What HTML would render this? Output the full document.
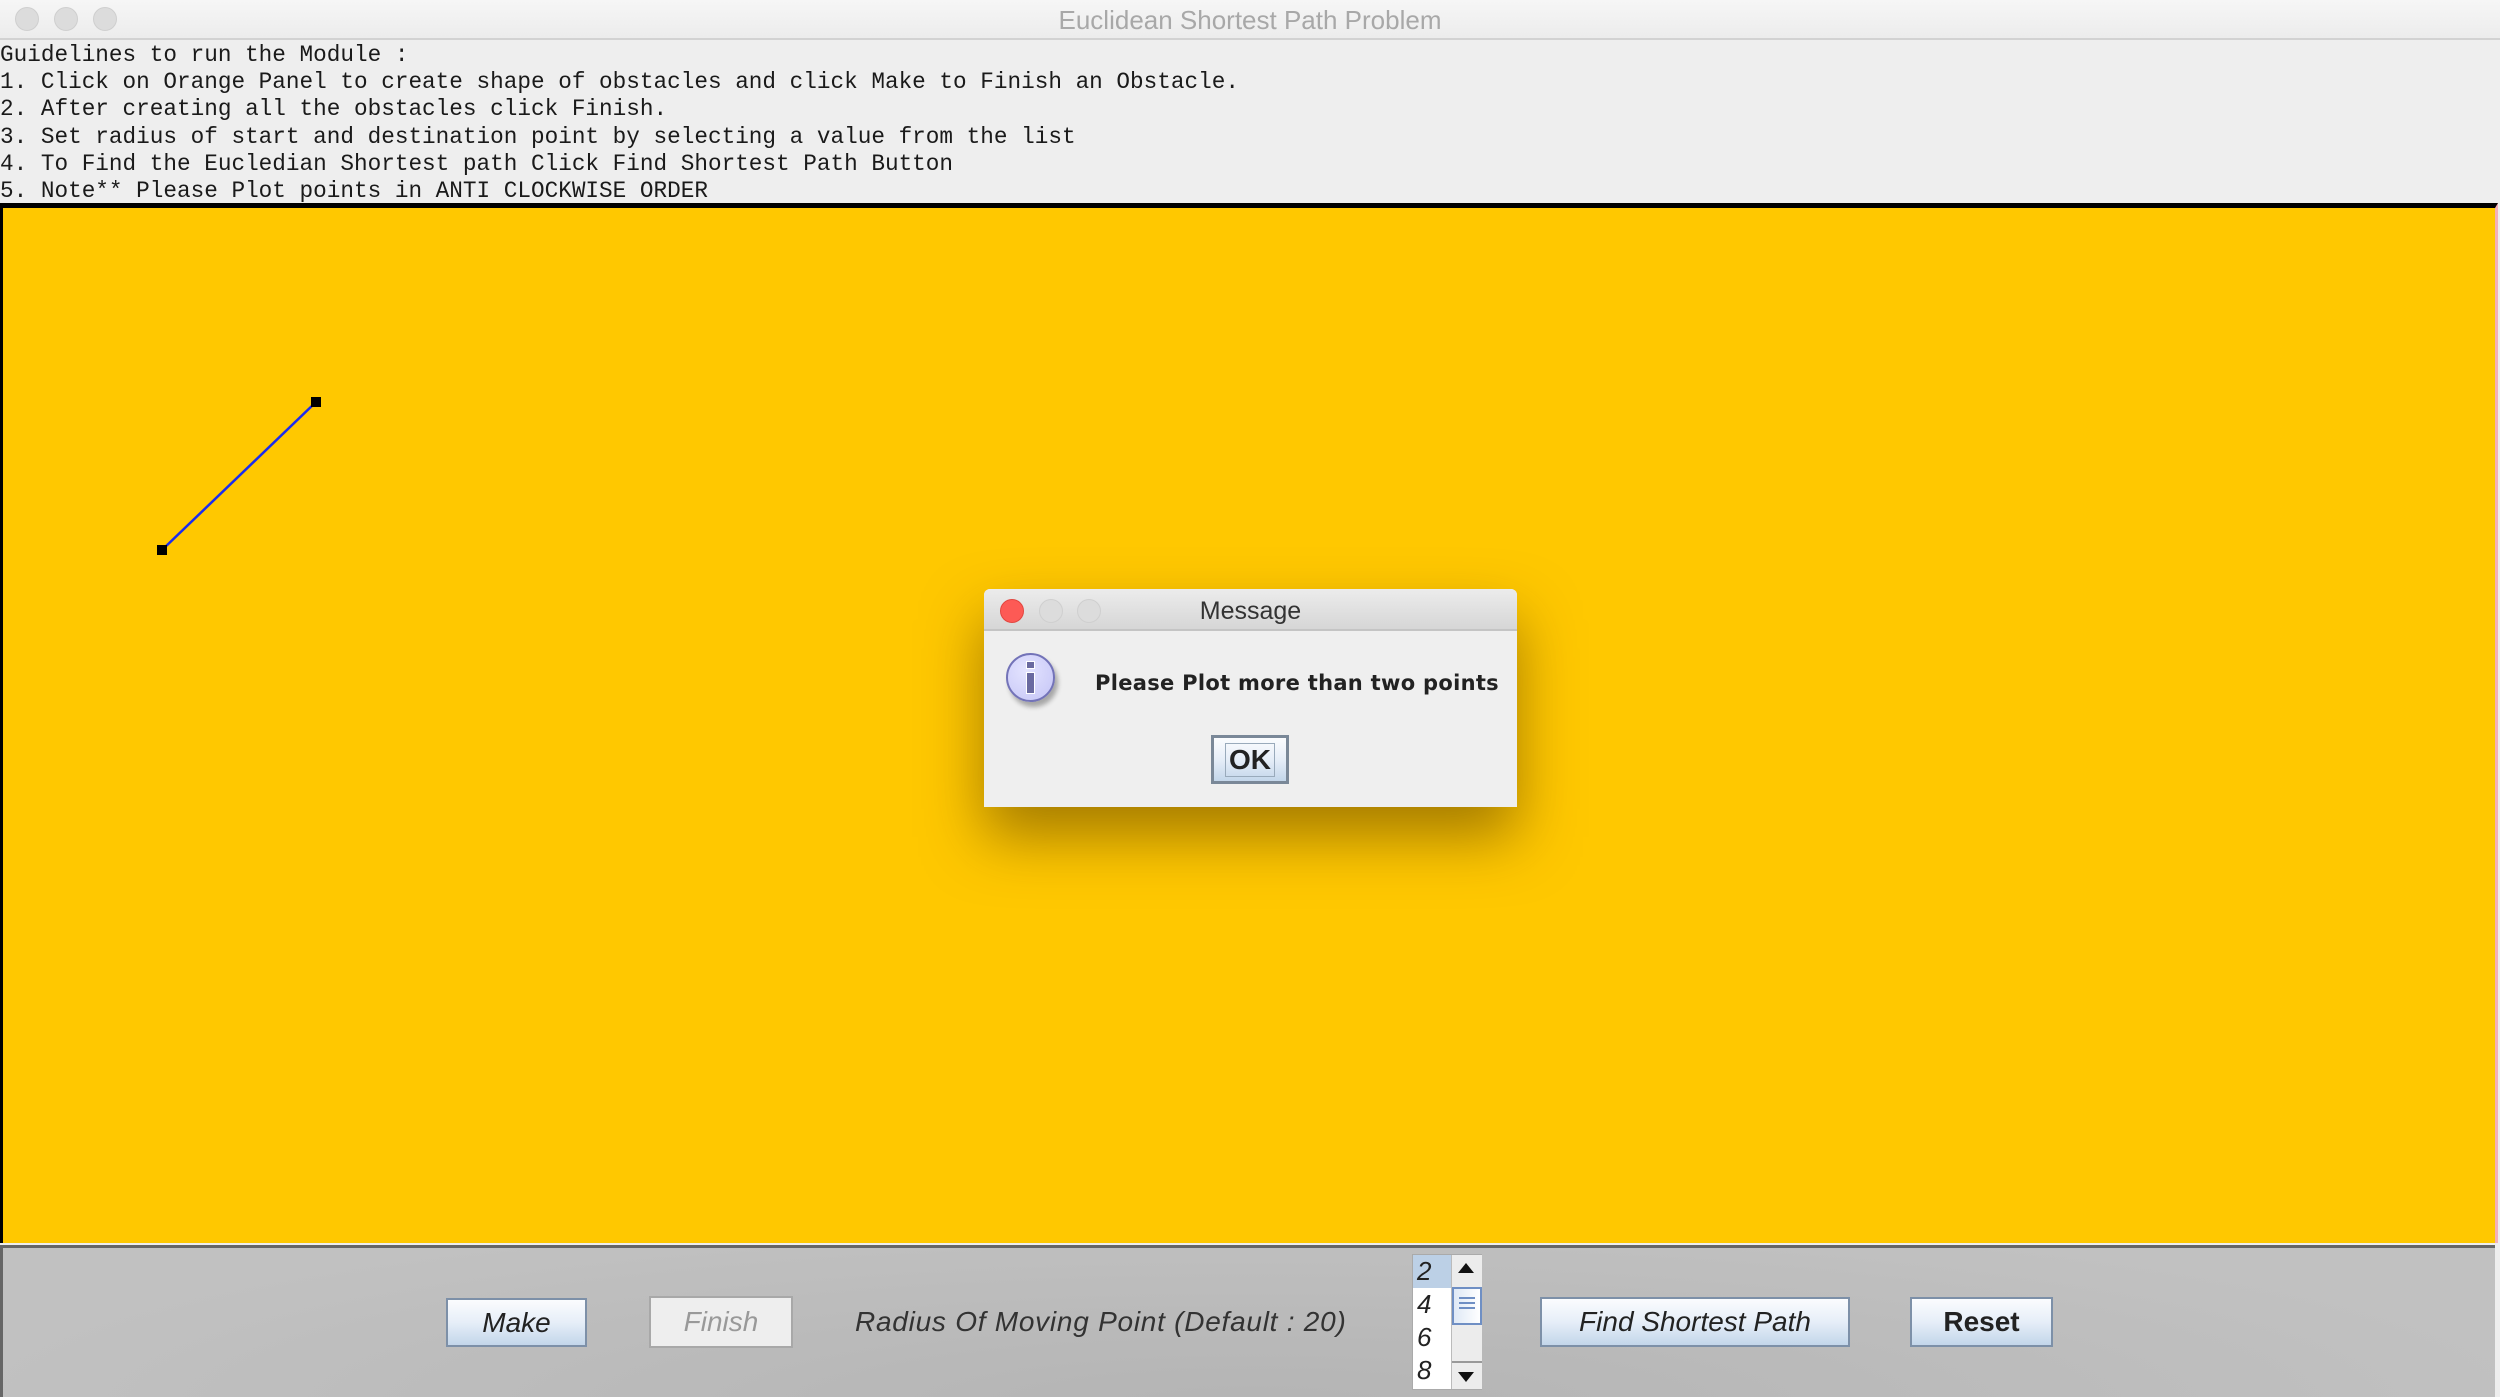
<!DOCTYPE html>
<html><head><meta charset="utf-8"><style>
*{margin:0;padding:0;box-sizing:border-box}
body{width:2500px;height:1397px;overflow:hidden;background:#eeeeee;position:relative;font-family:"Liberation Sans",sans-serif}
.abs{position:absolute}
#tb{left:0;top:0;width:2500px;height:40px;background:linear-gradient(#f6f6f6,#ececec);border-bottom:2px solid #d2d2d2}
.dot{position:absolute;width:24px;height:24px;border-radius:50%;background:#dcdcdc;border:1px solid #cfcfcf}
#title{left:0;width:2500px;top:5px;text-align:center;font-size:26px;color:#a8a8a8}
#guide{left:0;top:42px;font-family:"Liberation Mono",monospace;font-size:22.7px;line-height:27.2px;color:#1a1a1a;white-space:pre}
#yel{left:0;top:203px;width:2498px;height:1040px;background:#ffc800;border-top:5px solid #000;border-left:3px solid #000;border-right:3px solid #f4b0b8}
#gray{left:0;top:1245px;width:2495px;height:152px;background:radial-gradient(ellipse 1300px 200px at 1250px 160px,#b4b4b4,#c1c1c1);border-top:3px solid #666;border-left:3px solid #666}
.btn{position:absolute;background:linear-gradient(#fbfcfe,#e6eef8 50%,#c3d6ea);border:2px solid #7d90a8;font-size:28px;font-style:italic;color:#222;text-align:center;display:flex;align-items:center;justify-content:center;white-space:nowrap}
#dlg{left:984px;top:589px;width:533px;height:218px;background:#efefef;box-shadow:0 30px 60px rgba(90,60,0,.55);border-radius:6px 6px 0 0}
#dtb{left:0;top:0;width:533px;height:42px;background:linear-gradient(#ececec,#d6d6d6);border-bottom:2px solid #c4c4c4;border-radius:6px 6px 0 0}
</style></head><body>
<div id="tb" class="abs">
<div class="dot" style="left:15px;top:7px"></div>
<div class="dot" style="left:54px;top:7px"></div>
<div class="dot" style="left:93px;top:7px"></div>
</div>
<div id="title" class="abs">Euclidean Shortest Path Problem</div>
<div id="guide" class="abs">Guidelines to run the Module :
1. Click on Orange Panel to create shape of obstacles and click Make to Finish an Obstacle.
2. After creating all the obstacles click Finish.
3. Set radius of start and destination point by selecting a value from the list
4. To Find the Eucledian Shortest path Click Find Shortest Path Button
5. Note** Please Plot points in ANTI CLOCKWISE ORDER</div>
<div id="yel" class="abs"></div>
<svg class="abs" style="left:0;top:0" width="2500" height="1240">
<line x1="162" y1="550" x2="316" y2="402" stroke="#1a2cf0" stroke-width="2.5"/>
<rect x="157" y="545" width="10" height="10" fill="#000"/>
<rect x="311" y="397" width="10" height="10" fill="#000"/>
</svg>
<div id="gray" class="abs"></div>
<div class="btn" style="left:446px;top:1298px;width:141px;height:49px">Make</div>
<div class="btn" style="left:649px;top:1296px;width:144px;height:52px;background:#eeeeee;border-color:#a8a8a8;color:#999">Finish</div>
<div class="abs" style="left:855px;top:1306px;font-size:28px;font-style:italic;color:#333;letter-spacing:0.75px;white-space:nowrap">Radius Of Moving Point (Default : 20)</div>
<div class="abs" style="left:1412px;top:1254px;width:70px;height:136px;background:#fff;border:1px solid #aaa">
<div class="abs" style="left:0;top:0;width:38px;height:33px;background:#bcd0e6"></div>
<div class="abs" style="left:4px;top:0;font-size:26px;font-style:italic;line-height:33px;color:#222">2<br>4<br>6<br>8</div>
<div class="abs" style="left:38px;top:0;width:31px;height:134px;background:#ececec;border-left:1px solid #bbb">
<div class="abs" style="left:6px;top:8px;width:0;height:0;border-left:8px solid transparent;border-right:8px solid transparent;border-bottom:10px solid #111"></div>
<div class="abs" style="left:0;top:32px;width:30px;height:38px;background:linear-gradient(90deg,#dfe9f6,#fff);border:2px solid #6f8fc4"></div>
<div class="abs" style="left:7px;top:42px;width:16px;height:12px;border-top:2px solid #6f8fc4;border-bottom:2px solid #6f8fc4"></div>
<div class="abs" style="left:7px;top:47px;width:16px;height:2px;background:#6f8fc4"></div>
<div class="abs" style="left:0;top:106px;width:30px;height:28px;border-top:2px solid #999"></div>
<div class="abs" style="left:6px;top:117px;width:0;height:0;border-left:8px solid transparent;border-right:8px solid transparent;border-top:10px solid #111"></div>
</div></div>
<div class="btn" style="left:1540px;top:1297px;width:310px;height:50px">Find Shortest Path</div>
<div class="btn" style="left:1910px;top:1297px;width:143px;height:50px;font-style:normal;font-weight:bold">Reset</div>
<div id="dlg" class="abs">
<div id="dtb" class="abs">
<div class="dot" style="left:16px;top:10px;background:#fd5a55;border-color:#e2463f"></div>
<div class="dot" style="left:55px;top:10px"></div>
<div class="dot" style="left:93px;top:10px"></div>
<div class="abs" style="left:0;width:533px;top:8px;text-align:center;font-size:25px;color:#333">Message</div>
</div>
<div class="abs" style="left:22px;top:64px;width:49px;height:49px;border-radius:50%;background:radial-gradient(circle at 40% 35%,#e4e4ff,#c4c4f6);border:2px solid #7373b8;box-shadow:3px 5px 5px rgba(0,0,0,.3)"></div>
<div class="abs" style="left:42px;top:72px;width:9px;height:8px;background:#6a6aa0;border:1px solid #fff"></div>
<div class="abs" style="left:42px;top:83px;width:9px;height:22px;background:#6a6aa0;border:1px solid #fff"></div>
<div class="abs" style="left:111px;top:82px;font-weight:bold;color:#222;font-family:'DejaVu Sans','Liberation Sans',sans-serif;font-size:21px;white-space:nowrap;letter-spacing:0.3px">Please Plot more than two points</div>
<div class="btn" style="left:227px;top:146px;width:78px;height:49px;font-style:normal;font-weight:bold;border:3px solid #7a8898">
<span style="border:1px solid #9ab;padding:0 3px">OK</span></div>
</div>
</body></html>
